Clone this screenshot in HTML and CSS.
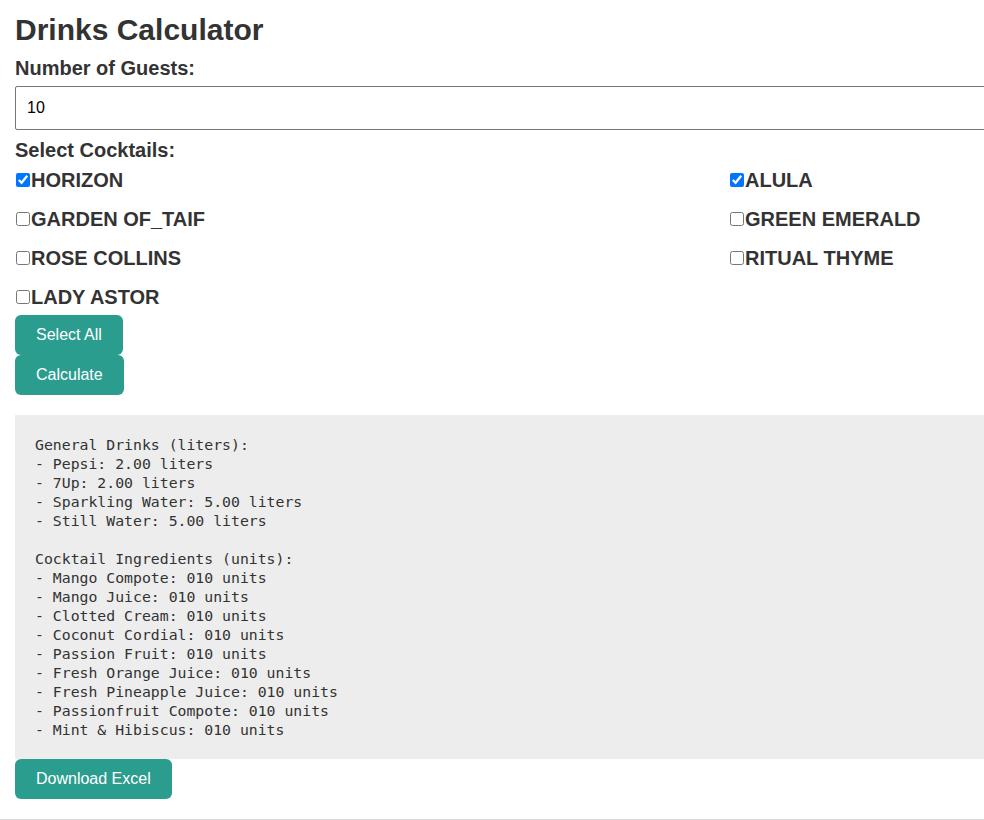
FILE: index.html
```html
<!DOCTYPE html>
<html lang="en">
<head>
<meta charset="utf-8">
<title>Drinks Calculator</title>
<link rel="stylesheet" href="styles.css">
</head>
<body>
<div class="app">
  <h1 class="title">Drinks Calculator</h1>
  <label class="field-label" for="guests">Number of Guests:</label>
  <input class="guests" id="guests" type="number" value="10">
  <div class="field-label cocktails-label">Select Cocktails:</div>
  <div class="checks">
    <label class="check"><input type="checkbox" checked>HORIZON</label>
    <label class="check"><input type="checkbox" checked>ALULA</label>
    <label class="check"><input type="checkbox">GARDEN OF_TAIF</label>
    <label class="check"><input type="checkbox">GREEN EMERALD</label>
    <label class="check"><input type="checkbox">ROSE COLLINS</label>
    <label class="check"><input type="checkbox">RITUAL THYME</label>
    <label class="check"><input type="checkbox">LADY ASTOR</label>
  </div>
  <button class="btn btn-first" type="button">Select All</button>
  <button class="btn" type="button">Calculate</button>
  <pre class="result">General Drinks (liters):
- Pepsi: 2.00 liters
- 7Up: 2.00 liters
- Sparkling Water: 5.00 liters
- Still Water: 5.00 liters

Cocktail Ingredients (units):
- Mango Compote: 010 units
- Mango Juice: 010 units
- Clotted Cream: 010 units
- Coconut Cordial: 010 units
- Passion Fruit: 010 units
- Fresh Orange Juice: 010 units
- Fresh Pineapple Juice: 010 units
- Passionfruit Compote: 010 units
- Mint &amp; Hibiscus: 010 units</pre>
  <button class="btn" type="button">Download Excel</button>
</div>
</body>
</html>
```
FILE: styles.css
```css
html, body {
  margin: 0;
  padding: 0;
  overflow: hidden;
  background: #ffffff;
}

body {
  font-family: "Liberation Sans", Arial, sans-serif;
  color: #333333;
}

.app {
  width: 1428px;
  padding: 13px 15px 20px 15px;
  border-bottom: 1px solid #dcdcdc;
}

.title {
  margin: 0 0 9px 0;
  font-size: 30px;
  line-height: 34px;
  font-weight: bold;
}

.field-label {
  display: block;
  font-size: 20px;
  line-height: 24px;
  font-weight: bold;
}

.guests {
  display: block;
  box-sizing: border-box;
  width: 100%;
  height: 44px;
  margin: 6px 0 8px 0;
  padding: 0 11px;
  border: 1px solid #767676;
  border-radius: 2px;
  font-family: "Liberation Sans", Arial, sans-serif;
  font-size: 16px;
  color: #000;
  background: #fff;
}

.checks {
  display: grid;
  grid-template-columns: 714px 714px;
  row-gap: 15px;
  margin-top: 6px;
}

.check {
  font-size: 20px;
  line-height: 24px;
  font-weight: bold;
}

.check input {
  width: 14px;
  height: 14px;
  margin: 3px 1px 2px 1px;
  accent-color: #0075ff;
}

.btn {
  display: block;
  border: none;
  border-radius: 6px;
  padding: 10px 21px;
  background: #2a9d8f;
  color: #ffffff;
  font-family: "Liberation Sans", Arial, sans-serif;
  font-size: 16px;
  line-height: 20px;
}

.btn-first {
  margin-top: 6px;
}

.result {
  margin: 20px 0 0 0;
  padding: 20px;
  background: #ededed;
  font-family: "DejaVu Sans Mono", "Liberation Mono", monospace;
  font-size: 14.8px;
  line-height: 19px;
  color: #333333;
}
```
